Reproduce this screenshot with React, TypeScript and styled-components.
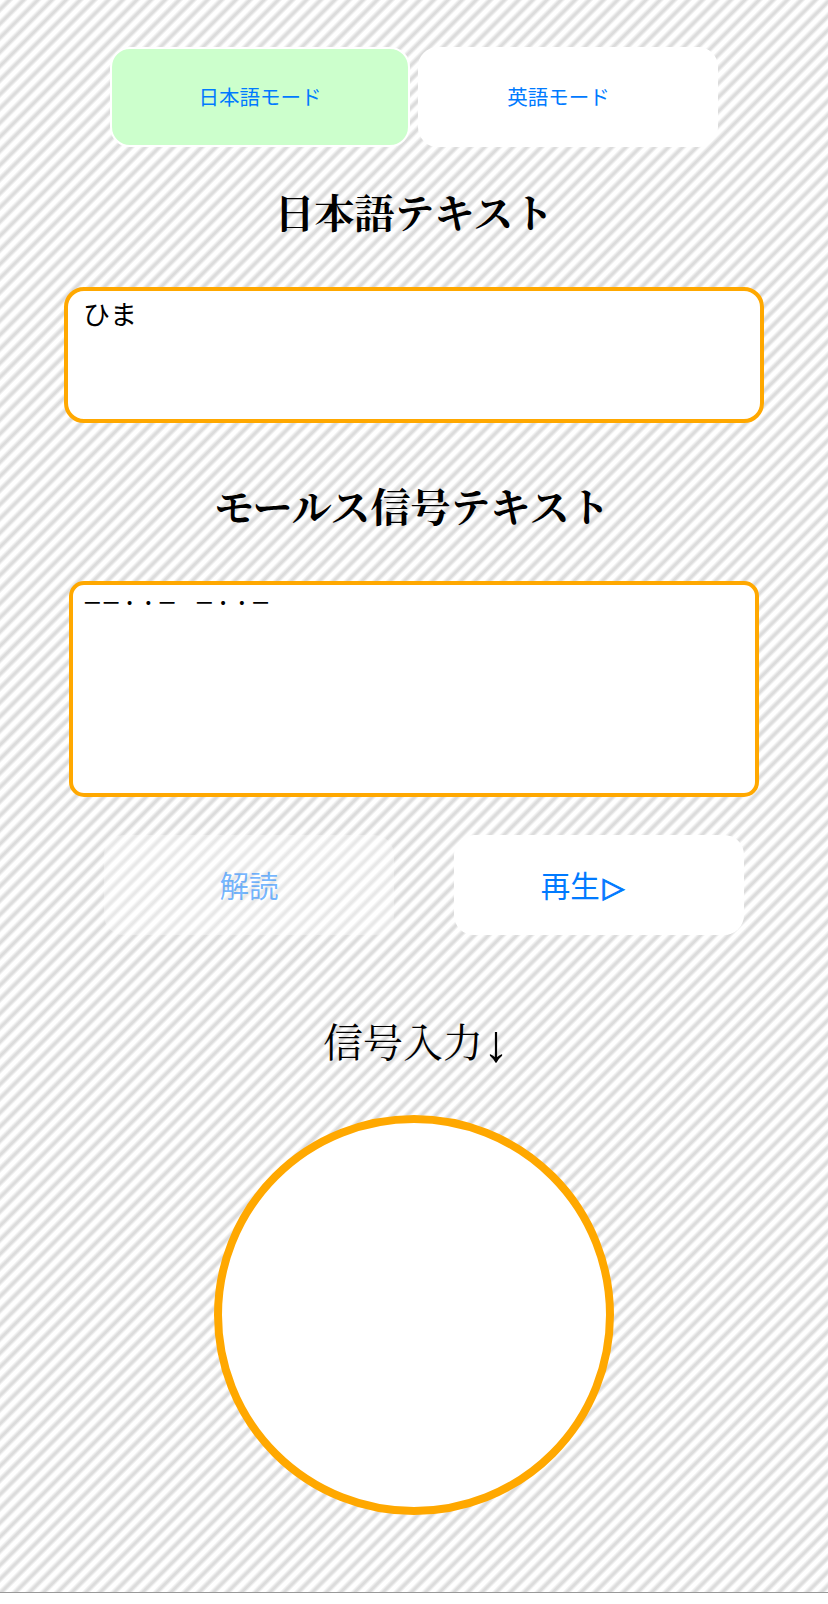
import React from "react";
import styled, { createGlobalStyle } from "styled-components";

const SANS = `"Noto Sans CJK JP", "Noto Sans", sans-serif`;
const MINCHO = `"Liberation Serif", "Noto Serif CJK JP", "Noto Sans CJK JP", serif`;
const ORANGE = "#ffa800";
const BLUE = "#007aff";

const GlobalStyle = createGlobalStyle`
  html, body {
    margin: 0;
    padding: 0;
    background: #fff;
  }
`;

const Page = styled.main`
  box-sizing: border-box;
  width: 828px;
  height: 1593px;
  padding-top: 47px;
  display: flex;
  flex-direction: column;
  align-items: center;
  border-bottom: 1px solid #999;
  background: repeating-linear-gradient(
    135deg,
    #fff 0,
    #fff 3px,
    #dcdcdc 6px,
    #dcdcdc 7.5px,
    #fff 10px
  );
`;

const ModeRow = styled.div`
  display: flex;
  gap: 8px;
`;

/* the labels sit off-centre in the reference, hence $shift */
const ModeButton = styled.button<{ $active?: boolean; $shift?: number }>`
  box-sizing: border-box;
  width: 300px;
  height: 100px;
  border: 2px solid #fff;
  border-radius: 20px;
  background: ${(p) => (p.$active ? "#ccffcc" : "#fff")};
  color: ${BLUE};
  font-family: ${SANS};
  font-size: 20.5px;
  padding: 0 ${(p) => p.$shift ?? 0}px 2px 0;
`;

const Heading = styled.h2<{ $top: number; $shift?: number }>`
  margin: ${(p) => p.$top}px ${(p) => p.$shift ?? 0}px 0 0;
  font-family: ${MINCHO};
  font-size: 40px;
  line-height: 56px;
  font-weight: 700;
  color: #000;
`;

const TextBox = styled.textarea<{
  $w: number;
  $h: number;
  $size: number;
  $top: number;
  $radius: number;
  $pad: string;
}>`
  display: block;
  box-sizing: border-box;
  width: ${(p) => p.$w}px;
  height: ${(p) => p.$h}px;
  margin-top: ${(p) => p.$top}px;
  padding: ${(p) => p.$pad};
  border: 4px solid ${ORANGE};
  border-radius: ${(p) => p.$radius}px;
  background: #fff;
  color: #000;
  font-family: ${SANS};
  font-size: ${(p) => p.$size}px;
  line-height: 1.2;
  resize: none;
  outline: none;
  overflow: hidden;
`;

const ActionRow = styled.div`
  display: flex;
  gap: 60px;
  margin-top: 38px;
  margin-left: 20px;
`;

const ActionButton = styled.button<{ $shift?: number }>`
  box-sizing: border-box;
  width: 290px;
  height: 100px;
  border: none;
  border-radius: 20px;
  background: #fff;
  color: ${BLUE};
  font-family: ${SANS};
  font-size: 29.5px;
  padding: 0 ${(p) => p.$shift ?? 0}px 2px 0;

  &:disabled {
    background: rgba(255, 255, 255, 0.35);
    color: rgba(0, 122, 255, 0.55);
  }
`;

const PlayGlyph = styled.span`
  margin-left: 3px;
  font-family: "DejaVu Sans", sans-serif;
  font-size: 28px;
  -webkit-text-stroke: 1px ${BLUE};
`;

const InputLabel = styled.div`
  margin: 80px 0 0 4px;
  font-family: ${MINCHO};
  font-size: 40px;
  line-height: 58px;
  color: #000;
`;

const ArrowGlyph = styled.span`
  font-size: 52px;
  line-height: 0;
  vertical-align: -4px;
`;

const SignalButton = styled.button`
  box-sizing: border-box;
  width: 400px;
  height: 400px;
  margin-top: 42px;
  border: 8px solid ${ORANGE};
  border-radius: 50%;
  background: #fff;
  padding: 0;
`;

export default function App() {
  return (
    <>
      <GlobalStyle />
      <Page>
        <ModeRow>
          <ModeButton $active>日本語モード</ModeButton>
          <ModeButton $shift={19}>英語モード</ModeButton>
        </ModeRow>
        <Heading $top={40}>日本語テキスト</Heading>
        <TextBox $w={700} $h={136} $size={27} $top={44} $radius={20} $pad="7px 15px" value="ひま" readOnly />
        <Heading $top={58} $shift={4}>モールス信号テキスト</Heading>
        <TextBox $w={690} $h={216} $size={18.7} $top={44} $radius={15} $pad="6px 10px" value="ーー・・ー　ー・・ー" readOnly />
        <ActionRow>
          <ActionButton disabled>解読</ActionButton>
          <ActionButton $shift={33}>
            再生<PlayGlyph>▷</PlayGlyph>
          </ActionButton>
        </ActionRow>
        <InputLabel>
          信号入力<ArrowGlyph>↓</ArrowGlyph>
        </InputLabel>
        <SignalButton aria-label="信号入力" />
      </Page>
    </>
  );
}
